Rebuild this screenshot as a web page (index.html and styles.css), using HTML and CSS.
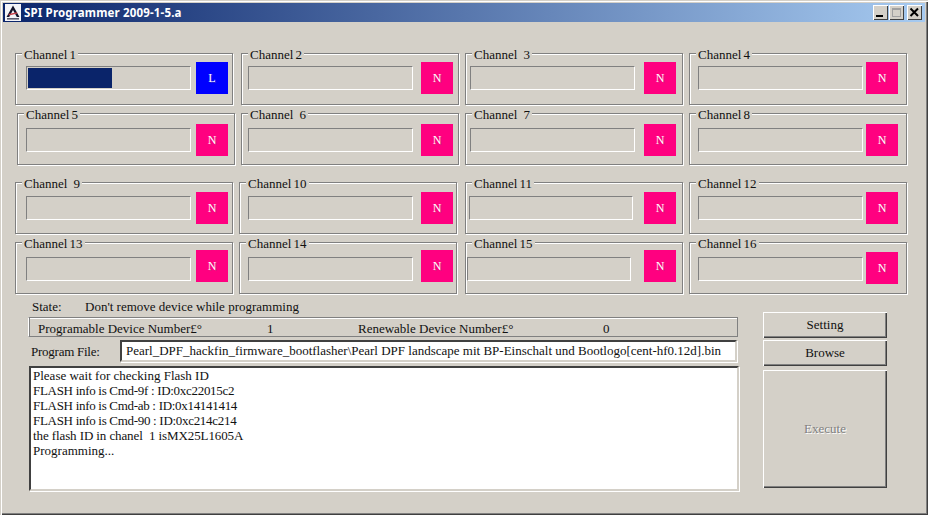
FILE: index.html
```html
<!DOCTYPE html>
<html lang="en">
<head>
<meta charset="utf-8">
<title>SPI Programmer 2009-1-5.a</title>
<link rel="stylesheet" href="styles.css">
</head>
<body>
<div class="window">
  <header class="titlebar">
    <svg class="appicon" viewBox="0 0 16 17" width="16" height="17" aria-hidden="true">
      <rect width="16" height="17" fill="#f4f4f8"/>
      <path d="M8 1.5 L14.5 13 H11.8 L8 6 L4.2 13 H1.5 Z" fill="#14142a"/>
      <path d="M3.5 10 L12 8.2 L12.4 9.6 L4 11.4 Z" fill="#c8404a"/>
      <rect x="2" y="14" width="12" height="1.6" fill="#5a5a70"/>
    </svg>
    <span class="title">SPI Programmer 2009-1-5.a</span>
    <div class="winbtns">
      <span class="winbtn"><svg viewBox="0 0 15 15" width="15" height="15"><rect x="3" y="10" width="7" height="2" fill="#000"/></svg></span>
      <span class="winbtn"><svg viewBox="0 0 15 15" width="15" height="15"><path d="M3 3h9v9H3z M4 5v6h7V5z" fill="#a0a0a0" fill-rule="evenodd"/></svg></span>
      <span class="winbtn close"><svg viewBox="0 0 15 15" width="15" height="15"><path d="M3.5 3.5 L11 11 M11 3.5 L3.5 11" stroke="#000" stroke-width="2" fill="none"/></svg></span>
    </div>
  </header>

  <main class="channels">
    <div class="row r1">
      <section class="group first p11 b181"><span class="legend">Channel 1</span><div class="prog"><div class="fill"></div></div><div class="led loaded">L</div></section>
      <section class="group gap8 p7 b180"><span class="legend">Channel 2</span><div class="prog"></div><div class="led">N</div></section>
      <section class="group p5 b179"><span class="legend wide">Channel 3</span><div class="prog"></div><div class="led">N</div></section>
      <section class="group p9 b177"><span class="legend">Channel 4</span><div class="prog"></div><div class="led">N</div></section>
    </div>
    <div class="row r2">
      <section class="group first shift2 p9 b179"><span class="legend">Channel 5</span><div class="prog"></div><div class="led">N</div></section>
      <section class="group p7 b180"><span class="legend wide">Channel 6</span><div class="prog"></div><div class="led">N</div></section>
      <section class="group p5 b179"><span class="legend wide">Channel 7</span><div class="prog"></div><div class="led">N</div></section>
      <section class="group p9 b177"><span class="legend">Channel 8</span><div class="prog"></div><div class="led">N</div></section>
    </div>
    <div class="row r3">
      <section class="group first p11 b181"><span class="legend wide">Channel 9</span><div class="prog"></div><div class="led">N</div></section>
      <section class="group p9 b182"><span class="legend">Channel 10</span><div class="prog"></div><div class="led">N</div></section>
      <section class="group gap8 p4 b179"><span class="legend">Channel 11</span><div class="prog narrow"></div><div class="led">N</div></section>
      <section class="group p9 b177"><span class="legend">Channel 12</span><div class="prog"></div><div class="led">N</div></section>
    </div>
    <div class="row r4">
      <section class="group first p11 b181"><span class="legend">Channel 13</span><div class="prog"></div><div class="led">N</div></section>
      <section class="group p9 b182"><span class="legend">Channel 14</span><div class="prog"></div><div class="led">N</div></section>
      <section class="group gap8 p2 b179"><span class="legend">Channel 15</span><div class="prog narrow"></div><div class="led">N</div></section>
      <section class="group p9 b177 low"><span class="legend">Channel 16</span><div class="prog"></div><div class="led">N</div></section>
    </div>
  </main>

  <div class="lower">
    <div class="left">
      <div class="state"><span class="state-label">State:</span><span>Don't remove device while programming</span></div>
      <div class="counts">
        <span class="c-a">Programable Device Number£°</span>
        <span class="c-b">1</span>
        <span class="c-c">Renewable Device Number£°</span>
        <span class="c-d">0</span>
      </div>
      <div class="file">
        <span class="file-label">Program File:</span>
        <div class="file-input">Pearl_DPF_hackfin_firmware_bootflasher\Pearl DPF landscape mit BP-Einschalt und Bootlogo[cent-hf0.12d].bin</div>
      </div>
      <div class="log">
        <div>Please wait for checking Flash ID</div>
        <div class="tight">FLASH info is Cmd-9f : ID:0xc22015c2</div>
        <div class="tight">FLASH info is Cmd-ab : ID:0x14141414</div>
        <div class="tight">FLASH info is Cmd-90 : ID:0xc214c214</div>
        <div class="snug">the flash ID in chanel&nbsp; 1 isMX25L1605A</div>
        <div>Programming...</div>
      </div>
    </div>
    <div class="right">
      <button class="btn setting">Setting</button>
      <button class="btn browse">Browse</button>
      <button class="btn execute" disabled>Execute</button>
    </div>
  </div>
</div>
</body>
</html>
```
FILE: styles.css
```css
* { box-sizing: border-box; }
html, body { margin: 0; padding: 0; }
body { width: 928px; height: 515px; overflow: hidden; background: #d4d0c8; }

.window {
  width: 928px;
  height: 515px;
  background: #d4d0c8;
  padding: 3px 3px 0;
  font: 13px/15px "Liberation Serif", "Times New Roman", serif;
  color: #111;
  box-shadow: inset 1px 1px 0 #d4d0c8, inset 2px 2px 0 #fff, inset -1px -1px 0 #404040, inset -2px -2px 0 #808080;
}

.titlebar {
  height: 19px;
  display: flex;
  align-items: center;
  padding: 0 3px 0 2px;
  background: linear-gradient(90deg, #0a246a, #a6caf0);
}
.appicon { flex: none; }
.title {
  margin-left: 3px;
  color: #fff;
  font: bold 11.5px/19px "Noto Sans", sans-serif;
  letter-spacing: .16px;
  white-space: nowrap;
}
.winbtns { margin-left: auto; display: flex; }
.winbtn {
  width: 15px;
  height: 15px;
  margin-left: 1px;
  background: #d4d0c8;
  box-shadow: inset 1px 1px 0 #fff, inset -1px -1px 0 #404040;
}
.winbtn svg { display: block; }
.winbtn.close { margin-left: 3px; }

.channels { padding: 31px 0 0 12px; }
.row { display: flex; }
.row + .row { margin-top: 8px; }
.row.r3 { margin-top: 17px; }
.r1 { --py: 12px; --by: 8px; }
.r2 { --py: 14px; --by: 10px; }
.r3 { --py: 13px; --by: 9px; }
.r4 { --py: 14px; --by: 7px; }

.group {
  position: relative;
  flex: none;
  display: flex;
  align-items: flex-start;
  width: 218px;
  height: 52px;
  margin-left: 6px;
  border: 1px solid #808080;
  box-shadow: 1px 1px 0 #fff, inset 1px 1px 0 #fff;
}
.group.first { margin-left: 0; }
.group.shift2 { margin-left: 2px; }
.group.gap8 { margin-left: 8px; }
.p2 { --p: 2px; }
.p4 { --p: 4px; }
.p5 { --p: 5px; }
.p7 { --p: 7px; }
.p9 { --p: 9px; }
.p11 { --p: 11px; }
.b177 { --b: 177px; }
.b179 { --b: 179px; }
.b180 { --b: 180px; }
.b181 { --b: 181px; }
.b182 { --b: 182px; }

.legend {
  position: absolute;
  left: 6px;
  top: -7px;
  padding: 0 2px;
  background: #d4d0c8;
  word-spacing: -1px;
  white-space: nowrap;
}
.legend.wide { word-spacing: 3px; }

.prog {
  flex: none;
  width: 165px;
  height: 24px;
  margin: var(--py) 0 0 calc(var(--p) - 1px);
  padding: 1px;
  border: 1px solid;
  border-color: #808080 #fff #fff #808080;
}
.prog.narrow { width: 164px; }
.fill { width: 84px; height: 20px; background: #0a246a; }

.led {
  flex: none;
  width: 32px;
  height: 32px;
  margin: var(--by) 0 0 calc(var(--b) - var(--p) - 165px);
  background: #ff0080;
  color: #fff;
  text-align: center;
  font-size: 12px;
  font-weight: 400;
  line-height: 32px;
  text-shadow: 1px 1px 0 rgba(120, 120, 120, .35);
}
.prog.narrow + .led { margin-left: calc(var(--b) - var(--p) - 164px); }
.led.loaded { background: #0000ff; }
.low .led { margin-top: 9px; }

.lower { display: flex; }
.left { width: 736px; margin-left: 26px; flex: none; }
.right { display: flex; flex-direction: column; margin: 18px 0 0 -2px; width: 124px; }

.state { height: 15px; margin: 5px 0 0 3px; display: flex; }
.state-label { width: 53px; }

.counts {
  position: relative;
  display: flex;
  width: 710px;
  height: 20px;
  margin: 3px 0 0 -1px;
  line-height: 21px;
  border: 1px solid #808080;
  border-left-color: #fff;
  box-shadow: inset 1px 0 0 #808080, inset 0 1px 0 #fff;
}
.c-a { margin-left: 9px; width: 229px; }
.c-b { width: 91px; }
.c-c { width: 245px; }

.file { display: flex; align-items: center; margin-top: 3px; height: 22px; }
.file-label { width: 91px; padding-left: 2px; letter-spacing: -.25px; }
.file-input {
  width: 617px;
  height: 22px;
  padding: 1px 0 0 4px;
  background: #fff;
  white-space: nowrap;
  overflow: hidden;
  border: 2px solid;
  border-color: #404040 #d4d0c8 #d4d0c8 #404040;
  box-shadow: 1px 1px 0 #fff;
}

.log {
  width: 710px;
  height: 125px;
  margin-top: 4px;
  padding: 0 0 0 2px;
  background: #fff;
  border: 2px solid;
  border-color: #404040 #d4d0c8 #d4d0c8 #404040;
  box-shadow: 1px 1px 0 #fff;
}
.tight { letter-spacing: -.3px; }
.snug { letter-spacing: -.1px; }

.btn {
  display: block;
  width: 124px;
  padding: 0 0 2px;
  background: #d4d0c8;
  font: inherit;
  color: #111;
  border: 0;
  box-shadow: inset 1px 1px 0 #fff, inset -1px -1px 0 #404040, inset -2px -2px 0 #808080;
}
.setting { height: 26px; }
.browse { height: 26px; margin-top: 2px; }
.execute { height: 118px; margin-top: 4px; color: #808080; text-shadow: 1px 1px 0 #fff; }
```
